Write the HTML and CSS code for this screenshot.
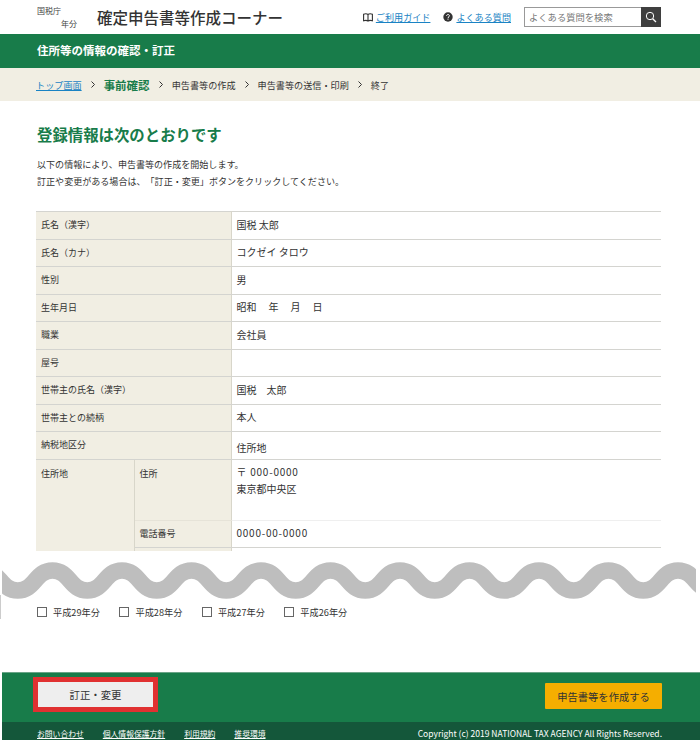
FILE: index.html
```html
<!DOCTYPE html>
<html lang="ja">
<head>
    <meta charset="UTF-8">
    <title>確定申告書等作成コーナー</title>
    <link rel="stylesheet" href="styles.css">
</head>
<body>
    <header class="site-header">
        <div class="tax-year">
            <div>国税庁</div>
            <div class="tax-year-bottom">年分</div>
        </div>
        <div class="site-title">確定申告書等作成コーナー</div>
        <div class="header-tools">
            <svg class="tool-icon" viewBox="0 0 10 9" width="10" height="9">
                <path d="M5 1.5C4 .7 2 .7.6 1.2v6.6C2 7.3 4 7.3 5 8c1-.7 3-.7 4.4-.2V1.2C8 .7 6 .7 5 1.5zM5 1.5V8" fill="none" stroke="#333" stroke-width="1.1"/>
            </svg>
            <a href="#" class="tool-link guide-link">ご利用ガイド</a>
            <svg class="tool-icon" viewBox="0 0 10 10" width="10" height="10">
                <circle cx="5" cy="5" r="4.7" fill="#333"/>
                <path d="M3.6 3.9C3.6 2 6.5 2.1 6.4 3.8 6.4 4.9 5 4.8 5 6" fill="none" stroke="#fff" stroke-width="1"/>
                <rect x="4.5" y="6.6" width="1" height="1.1" fill="#fff"/>
            </svg>
            <a href="#" class="tool-link">よくある質問</a>
            <form class="search-box">
                <input type="text" class="search-input" placeholder="よくある質問を検索">
                <button type="button" class="search-btn">
                    <svg viewBox="0 0 12 12" width="12" height="12">
                        <circle cx="5" cy="5" r="3.7" fill="none" stroke="#fff" stroke-width="1"/>
                        <path d="M7.7 7.7L11 11" stroke="#fff" stroke-width="1.3"/>
                    </svg>
                </button>
            </form>
        </div>
    </header>

    <div class="page-bar">住所等の情報の確認・訂正</div>

    <nav class="steps">
        <a href="#" class="step-link">トップ画面</a>
        <svg class="chevron" viewBox="0 0 4 7" width="4" height="7"><path d="M.5.5l3 3-3 3" fill="none" stroke="#333"/></svg>
        <span class="step-current">事前確認</span>
        <svg class="chevron" viewBox="0 0 4 7" width="4" height="7"><path d="M.5.5l3 3-3 3" fill="none" stroke="#333"/></svg>
        <span>申告書等の作成</span>
        <svg class="chevron" viewBox="0 0 4 7" width="4" height="7"><path d="M.5.5l3 3-3 3" fill="none" stroke="#333"/></svg>
        <span>申告書等の送信・印刷</span>
        <svg class="chevron" viewBox="0 0 4 7" width="4" height="7"><path d="M.5.5l3 3-3 3" fill="none" stroke="#333"/></svg>
        <span>終了</span>
    </nav>

    <main class="content">
        <h1 class="page-title">登録情報は次のとおりです</h1>
        <p class="lead">以下の情報により、申告書等の作成を開始します。<br>訂正や変更がある場合は、「訂正・変更」ボタンをクリックしてください。</p>

        <div class="table-clip">
            <table class="info-table">
                <colgroup>
                    <col class="col-a">
                    <col class="col-b">
                    <col>
                </colgroup>
                <tr><th colspan="2">氏名（漢字）</th><td>国税 太郎</td></tr>
                <tr><th colspan="2">氏名（カナ）</th><td>コクゼイ タロウ</td></tr>
                <tr><th colspan="2">性別</th><td>男</td></tr>
                <tr><th colspan="2">生年月日</th><td>昭和　<span class="date-part">年</span>　<span class="date-part">月</span>　<span class="date-part">日</span></td></tr>
                <tr><th colspan="2">職業</th><td>会社員</td></tr>
                <tr><th colspan="2">屋号</th><td></td></tr>
                <tr><th colspan="2">世帯主の氏名（漢字）</th><td>国税　太郎</td></tr>
                <tr><th colspan="2">世帯主との続柄</th><td>本人</td></tr>
                <tr><th colspan="2">納税地区分</th><td class="td-low">住所地</td></tr>
                <tr class="address-row">
                    <th rowspan="3">住所地</th>
                    <th>住所</th>
                    <td><span class="num">〒 000-0000</span><br>東京都中央区</td>
                </tr>
                <tr><th>電話番号</th><td><span class="num">0000-00-0000</span></td></tr>
                <tr><th></th><td></td></tr>
            </table>
        </div>

        <svg class="wave" viewBox="0 0 694 38" width="694" height="38">
            <path d="M-19 8.5c17.4 0 17.4 20 34.75 20s17.4-20 34.75-20 17.4 20 34.75 20 17.4-20 34.75-20 17.4 20 34.75 20 17.4-20 34.75-20 17.4 20 34.75 20 17.4-20 34.75-20 17.4 20 34.75 20 17.4-20 34.75-20 17.4 20 34.75 20 17.4-20 34.75-20 17.4 20 34.75 20 17.4-20 34.75-20 17.4 20 34.75 20 17.4-20 34.75-20 17.4 20 34.75 20 17.4-20 34.75-20 17.4 20 34.75 20 17.4-20 34.75-20 17.4 20 34.75 20 17.4-20 34.75-20" fill="none" stroke="#bebebe" stroke-width="16.5"/>
        </svg>

        <div class="years">
            <label class="year-item"><span class="year-box"></span>平成29年分</label>
            <label class="year-item"><span class="year-box"></span>平成28年分</label>
            <label class="year-item"><span class="year-box"></span>平成27年分</label>
            <label class="year-item"><span class="year-box"></span>平成26年分</label>
        </div>
    </main>

    <footer class="site-footer">
        <div class="footer-actions">
            <button type="button" class="btn-edit">訂正・変更</button>
            <button type="button" class="btn-create">申告書等を作成する</button>
        </div>
        <div class="footer-links">
            <a href="#">お問い合わせ</a>
            <a href="#">個人情報保護方針</a>
            <a href="#">利用規約</a>
            <a href="#">推奨環境</a>
            <span class="copyright">Copyright (c) 2019 NATIONAL TAX AGENCY All Rights Reserved.</span>
        </div>
    </footer>
</body>
</html>
```

FILE: styles.css
```css
* {
    margin: 0;
    padding: 0;
    box-sizing: border-box;
}

html, body {
    height: 740px;
    overflow: hidden;
}

body {
    background-color: #fff;
    color: #333;
    font-family: "Noto Sans CJK JP", "Noto Sans", sans-serif;
    font-size: 9px;
    text-spacing-trim: space-all;
}

a {
    color: #1a83c4;
}

.site-header {
    height: 34px;
    padding: 0 39px 0 37px;
    display: flex;
    align-items: center;
}

.tax-year {
    width: 40px;
    margin-right: 20px;
    font-size: 8px;
    line-height: 13px;
    color: #444;
}

.tax-year-bottom {
    text-align: right;
}

.site-title {
    font-size: 15.5px;
    font-weight: 500;
    color: #333;
}

.header-tools {
    margin-left: auto;
    display: flex;
    align-items: center;
}

.tool-icon {
    margin-right: 3px;
}

.tool-link {
    font-size: 9.1px;
}

.guide-link {
    margin-right: 13px;
}

.search-box {
    margin-left: 13px;
    display: flex;
    height: 20px;
}

.search-input {
    width: 117px;
    height: 20px;
    border: 1px solid #999;
    border-right: none;
    padding-left: 4px;
    font-family: inherit;
    font-size: 9.3px;
    outline: none;
}

.search-input::placeholder {
    color: #777;
}

.search-btn {
    width: 20px;
    height: 20px;
    border: none;
    background-color: #3f3f3f;
    display: flex;
    align-items: center;
    justify-content: center;
}

.page-bar {
    height: 34px;
    padding-left: 37px;
    background-color: #187c4a;
    color: #fff;
    font-size: 11.5px;
    font-weight: 700;
    line-height: 32px;
}

.steps {
    height: 33px;
    padding-left: 36px;
    background-color: #f1eee3;
    display: flex;
    align-items: center;
    gap: 9px;
    font-size: 9.15px;
}

.step-current {
    color: #187c4a;
    font-size: 11.5px;
    font-weight: 700;
}

.content {
    padding-top: 24px;
}

.page-title {
    margin-left: 37px;
    color: #187c4a;
    font-size: 15.4px;
    font-weight: 700;
    line-height: 18px;
}

.lead {
    margin: 13px 0 21px 37px;
    font-size: 9.05px;
    line-height: 17px;
}

.table-clip {
    margin-left: 36px;
    width: 625px;
    height: 340px;
    overflow: hidden;
}

.info-table {
    width: 625px;
    table-layout: fixed;
    border-collapse: collapse;
    border-top: 1px solid #d4d4d0;
}

.col-a {
    width: 98px;
}

.col-b {
    width: 97px;
}

.info-table tr {
    height: 27.5px;
}

.info-table th,
.info-table td {
    padding: 0 5px 2px;
    border-bottom: 1px solid #d4d4d0;
    font-weight: 400;
    text-align: left;
    vertical-align: middle;
}

.info-table th {
    padding-bottom: 1px;
    background-color: #f1eee3;
    border-right: 1px solid #d8d6ca;
    line-height: 13px;
}

.info-table td {
    font-size: 10px;
    line-height: 17px;
}

.info-table .td-low {
    padding: 4px 5px 0;
}

.date-part {
    margin-left: 2px;
}

.num {
    letter-spacing: 0.75px;
}

.info-table .address-row {
    height: 61px;
}

.info-table .address-row th {
    vertical-align: top;
    padding-top: 7px;
}

.info-table .address-row td {
    vertical-align: top;
    padding-top: 3px;
    border-bottom-color: #efefef;
}

.address-row th + th {
    border-bottom-color: #e6e3d8;
}

.wave {
    display: block;
    margin: 11px 0 -5px 2px;
}

.years {
    height: 24px;
    padding: 9px 0 0 36px;
    border-left: 1px solid #ccc;
    display: flex;
    gap: 19.5px;
    font-size: 9.2px;
}

.year-item {
    display: flex;
    align-items: center;
    height: 16px;
    line-height: 16px;
}

.year-box {
    width: 10px;
    height: 10px;
    margin-right: 6px;
    border: 1px solid #666;
}

.site-footer {
    margin: 53px 0 0 2px;
    color: #fff;
}

.footer-actions {
    height: 50px;
    padding: 4px 38px 0 31px;
    background-color: #187c4a;
    border-top: 1px solid #6aa487;
    display: flex;
    justify-content: space-between;
    align-items: flex-start;
}

.btn-edit {
    width: 125px;
    height: 35px;
    border: 5px solid #e03131;
    background-color: #eee;
    color: #333;
    font-family: inherit;
    font-size: 10.4px;
}

.btn-create {
    width: 117px;
    height: 26px;
    margin-top: 6px;
    border: none;
    border-radius: 1px;
    background-color: #f5ae00;
    color: #333;
    font-family: inherit;
    font-size: 10.3px;
}

.footer-links {
    height: 18px;
    padding: 4px 38px 0 35px;
    background-color: #14573a;
    display: flex;
    align-items: center;
    gap: 19px;
    font-size: 7.8px;
}

.footer-links a {
    color: #fff;
}

.copyright {
    margin-left: auto;
    font-size: 8.5px;
    white-space: nowrap;
}
```
